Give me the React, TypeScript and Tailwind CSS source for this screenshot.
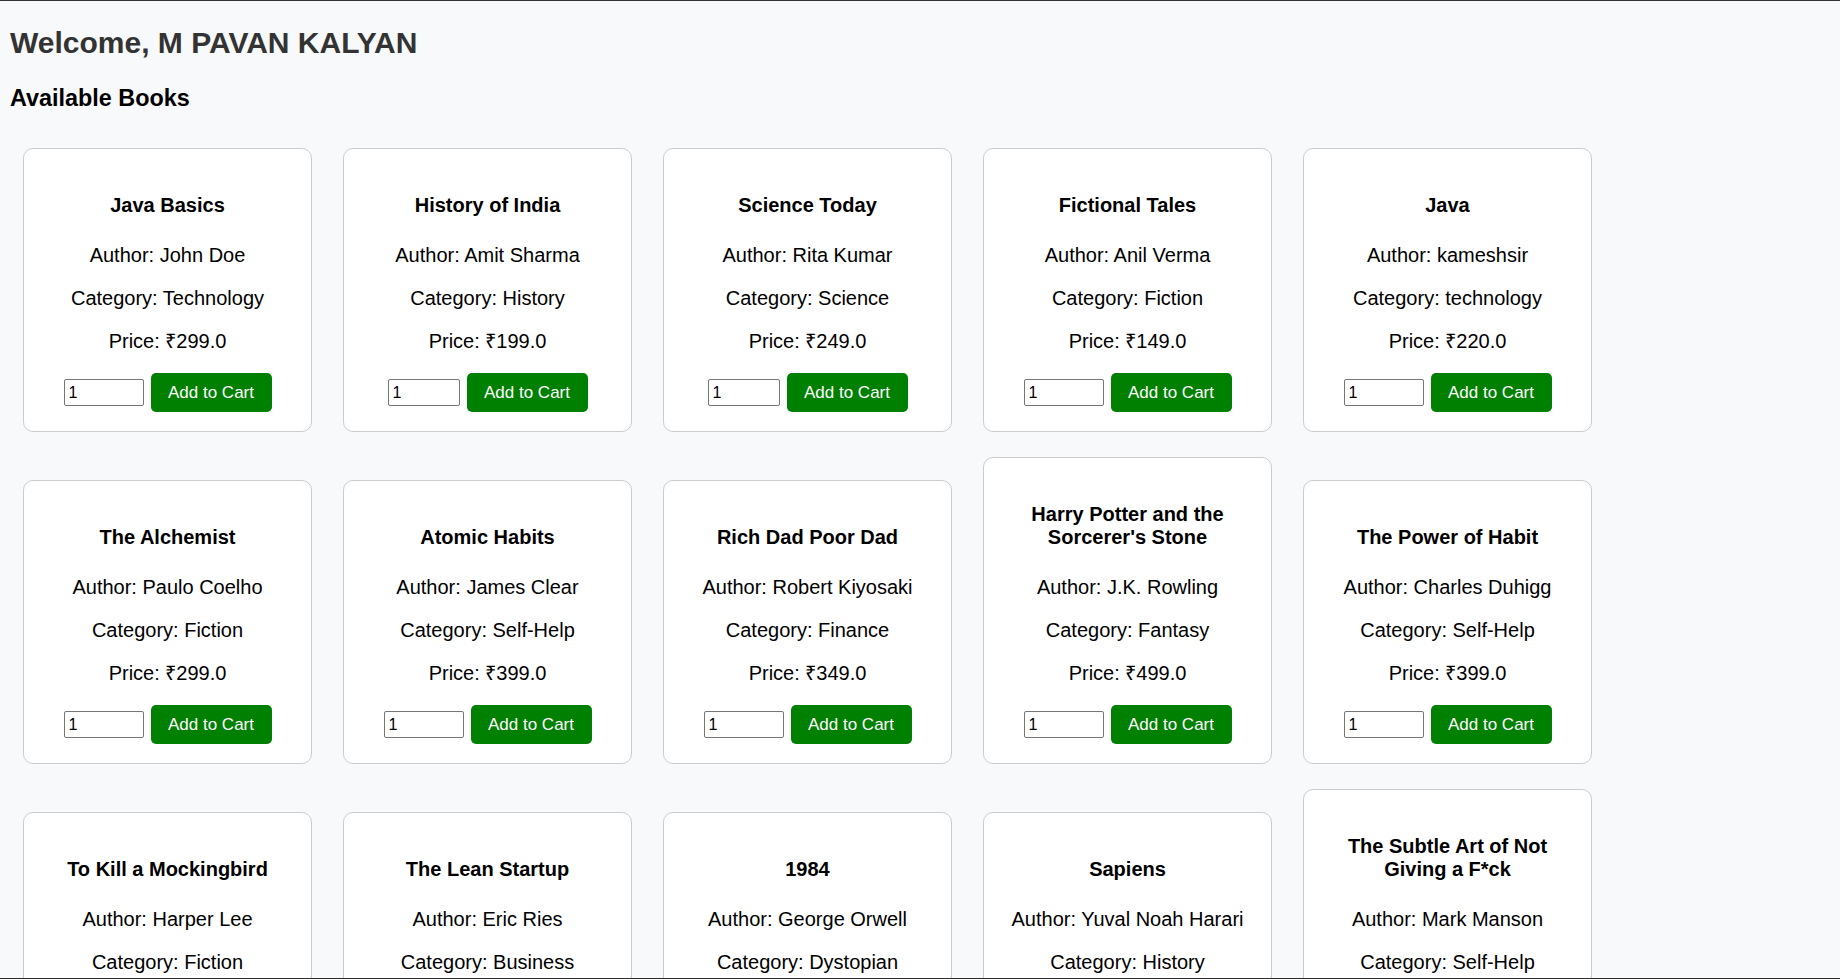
import { useState } from "react";

type Book = {
  title: string;
  author: string;
  category: string;
  price: string;
  narrow?: boolean;
};

const books: Book[] = [
  { title: "Java Basics", author: "John Doe", category: "Technology", price: "299.0" },
  { title: "History of India", author: "Amit Sharma", category: "History", price: "199.0", narrow: true },
  { title: "Science Today", author: "Rita Kumar", category: "Science", price: "249.0", narrow: true },
  { title: "Fictional Tales", author: "Anil Verma", category: "Fiction", price: "149.0" },
  { title: "Java", author: "kameshsir", category: "technology", price: "220.0" },
  { title: "The Alchemist", author: "Paulo Coelho", category: "Fiction", price: "299.0" },
  { title: "Atomic Habits", author: "James Clear", category: "Self-Help", price: "399.0" },
  { title: "Rich Dad Poor Dad", author: "Robert Kiyosaki", category: "Finance", price: "349.0" },
  { title: "Harry Potter and the Sorcerer's Stone", author: "J.K. Rowling", category: "Fantasy", price: "499.0" },
  { title: "The Power of Habit", author: "Charles Duhigg", category: "Self-Help", price: "399.0" },
  { title: "To Kill a Mockingbird", author: "Harper Lee", category: "Fiction", price: "250.0" },
  { title: "The Lean Startup", author: "Eric Ries", category: "Business", price: "450.0" },
  { title: "1984", author: "George Orwell", category: "Dystopian", price: "199.0" },
  { title: "Sapiens", author: "Yuval Noah Harari", category: "History", price: "499.0" },
  { title: "The Subtle Art of Not Giving a F*ck", author: "Mark Manson", category: "Self-Help", price: "299.0" },
];

function BookCard({ book }: { book: Book }) {
  const [qty, setQty] = useState("1");

  return (
    <div className="w-[289px] bg-white border border-[#cccccc] rounded-[10px] px-5 pt-[45px] pb-[19px] text-center text-black">
      <h3 className="text-[20px] leading-[23px] font-bold">{book.title}</h3>
      <p className="mt-[27px] text-[20px] leading-[23px]">Author: {book.author}</p>
      <p className="mt-5 text-[20px] leading-[23px]">Category: {book.category}</p>
      <p className="mt-5 text-[20px] leading-[23px]">Price: ₹{book.price}</p>
      <div className="mt-[20px] flex items-center justify-center gap-[7px]">
        <input
          type="text"
          value={qty}
          onChange={(e) => setQty(e.target.value)}
          className={`${book.narrow ? "w-[72px]" : "w-[80px]"} h-[27px] border border-[#767676] rounded-[2px] pl-[4px] text-[16px] text-black bg-white focus:outline-none`}
        />
        <button className="w-[121px] h-[39px] bg-[#008000] text-white text-[17px] rounded-[5px]">
          Add to Cart
        </button>
      </div>
    </div>
  );
}

export default function App() {
  return (
    <div className="min-h-screen bg-[#f8f9fa] border-t border-[#333333] pl-[10px] font-['Liberation_Sans',Arial,sans-serif]">
      <h1 className="pt-[25px] text-[30px] leading-[34px] font-bold text-[#333333]">
        Welcome, M PAVAN KALYAN
      </h1>
      <h2 className="mt-[25px] text-[23.4px] leading-[27px] font-bold text-black">Available Books</h2>

      <div className="mt-[36px] ml-[13px] flex flex-wrap items-end gap-x-[31px] gap-y-[25px] pb-10">
        {books.map((b) => (
          <BookCard key={b.title} book={b} />
        ))}
      </div>

      <div className="fixed inset-x-0 bottom-0 h-px bg-[#2b2b2b]" />
    </div>
  );
}
